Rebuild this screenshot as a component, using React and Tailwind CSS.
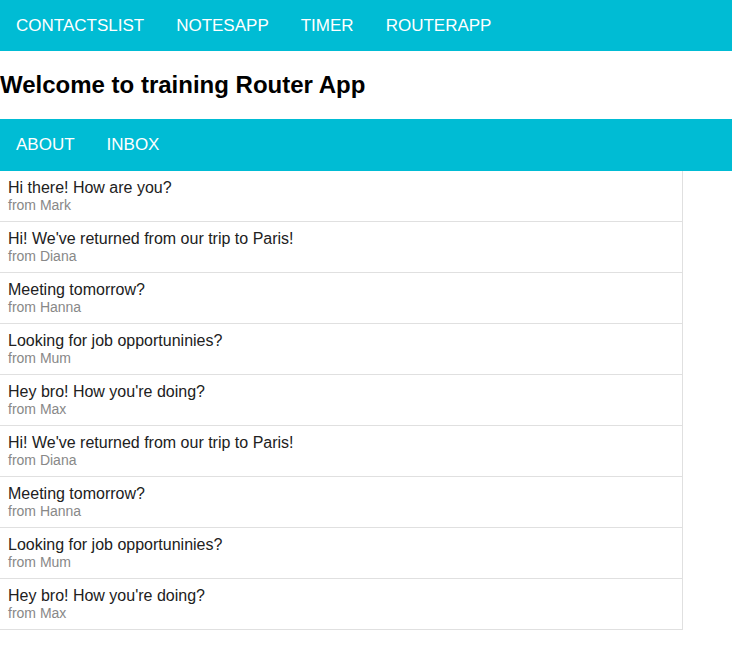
import React from "react";

const messages = [
  ["Hi there! How are you?", "Mark"],
  ["Hi! We've returned from our trip to Paris!", "Diana"],
  ["Meeting tomorrow?", "Hanna"],
  ["Looking for job opportuninies?", "Mum"],
  ["Hey bro! How you're doing?", "Max"],
  ["Hi! We've returned from our trip to Paris!", "Diana"],
  ["Meeting tomorrow?", "Hanna"],
  ["Looking for job opportuninies?", "Mum"],
  ["Hey bro! How you're doing?", "Max"],
];

function NavBar({ items, h }) {
  return (
    <nav className={`flex items-center bg-[#00bcd4] ${h}`}>
      {items.map((t) => (
        <a key={t} className="px-4 text-[17px] uppercase text-white leading-none">
          {t}
        </a>
      ))}
    </nav>
  );
}

export default function App() {
  return (
    <div className="bg-white min-h-[652px]" style={{ fontFamily: '"Liberation Sans", Arial, sans-serif' }}>
      <NavBar items={["ContactsList", "NotesApp", "Timer", "RouterApp"]} h="h-[51px]" />
      <h2 className="my-[20px] text-[24px] leading-[28px] font-bold text-black">
        Welcome to training Router App
      </h2>
      <NavBar items={["About", "Inbox"]} h="h-[52px] pb-[2px]" />
      <ul className="w-[683px] border-r border-[#e0e0e0]">
        {messages.map(([title, from], i) => (
          <li key={i} className="h-[51px] border-b border-[#e0e0e0] px-2 pt-[8px]">
            <div className="text-[16px] leading-[18px] text-[#212121]">{title}</div>
            <div className="text-[14px] leading-[16px] text-[#888888]">from {from}</div>
          </li>
        ))}
      </ul>
    </div>
  );
}
